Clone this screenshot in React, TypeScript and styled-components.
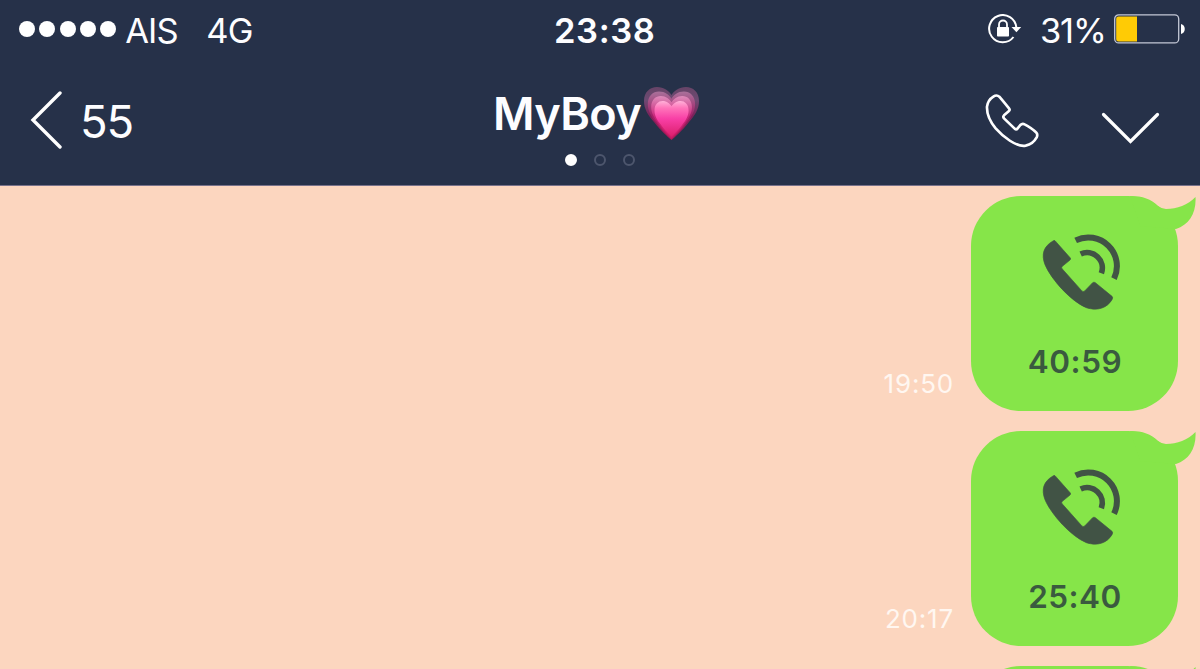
import React from "react";
import styled, { createGlobalStyle } from "styled-components";

const GlobalStyle = createGlobalStyle`
  * {
    box-sizing: border-box;
  }
  body {
    margin: 0;
    font-family: Inter, "Liberation Sans", sans-serif;
  }
`;

const Screen = styled.div`
  width: 1200px;
  height: 669px;
  overflow: hidden;
  display: flex;
  flex-direction: column;
  background: #fcd6bf;
`;

const Header = styled.header`
  flex: none;
  height: 186px;
  background: #263149;
  border-bottom: 1px solid #77718a;
  color: #fdfdff;
`;

const StatusBar = styled.div`
  display: grid;
  grid-template-columns: 554px 434px 1fr;
  height: 60px;
  align-items: center;
`;

const StatusGroup = styled.div<{ $left?: number }>`
  display: flex;
  align-items: center;
  height: 60px;
  padding-left: ${(p) => p.$left ?? 0}px;
`;

const Signal = styled.div`
  display: flex;
  gap: 4.3px;
  margin-right: 9px;
  margin-bottom: 2px;
`;

const SignalDot = styled.span`
  width: 16px;
  height: 16px;
  border-radius: 50%;
  background: #fff;
`;

const StatusText = styled.span<{ $width: number; $spacing?: number }>`
  width: ${(p) => p.$width}px;
  font-size: 34.5px;
  line-height: 60px;
  letter-spacing: ${(p) => p.$spacing ?? 0}px;
  padding-top: 1px;
  white-space: nowrap;
`;

const Clock = styled(StatusText)`
  font-weight: 600;
`;

const BatteryIcon = styled.svg`
  display: block;
  margin-bottom: 2px;
`;

const LockIcon = styled.svg`
  display: block;
  margin-right: 18px;
  margin-bottom: 3px;
`;

const NavBar = styled.div`
  display: grid;
  grid-template-columns: 493px 491px 1fr;
  height: 125px;
`;

const BackButton = styled.div`
  display: flex;
  align-items: center;
  height: 119px;
  padding-left: 30px;
`;

const BackCount = styled.span`
  margin-left: 17px;
  margin-top: 3px;
  font-size: 45.5px;
  letter-spacing: -1.2px;
`;

const TitleBlock = styled.div`
  display: flex;
  flex-direction: column;
`;

const Title = styled.div`
  display: flex;
  height: 90px;
  padding-top: 25px;
`;

const TitleText = styled.span`
  width: 150.5px;
  font-size: 45px;
  font-weight: 600;
  line-height: 58px;
  letter-spacing: -0.6px;
  white-space: nowrap;
`;

const HeartIcon = styled.svg`
  display: block;
  margin-top: 2px;
`;

const Pager = styled.div`
  display: flex;
  gap: 17px;
  padding-left: 72.4px;
  padding-top: 3.5px;
`;

const PageDot = styled.span<{ $active?: boolean }>`
  width: 12px;
  height: 12px;
  border-radius: 50%;
  border: 2px solid ${(p) => (p.$active ? "#fff" : "#4d566d")};
  background: ${(p) => (p.$active ? "#fff" : "transparent")};
`;

const Actions = styled.div`
  display: flex;
  padding-top: 32px;
`;

const ChevronDown = styled.svg`
  margin-left: 61px;
  margin-top: 17.5px;
`;

const Messages = styled.main`
  display: flex;
  flex-direction: column;
  gap: 20px;
  padding: 10px 22px 0 0;
`;

const MessageRow = styled.div`
  display: flex;
  flex: none;
  justify-content: flex-end;
  align-items: flex-end;
`;

const SentAt = styled.span`
  margin-right: 16.5px;
  margin-bottom: 11px;
  font-size: 26px;
  line-height: 32px;
  letter-spacing: 0.8px;
  color: #fff7f1;
`;

const Bubble = styled.div`
  position: relative;
  display: flex;
  flex-direction: column;
  align-items: center;
  width: 207.5px;
  height: 215px;
  padding: 38px 0 0 11.5px;
  border-radius: 50px;
  background: #86e549;
`;

const Tail = styled.svg`
  position: absolute;
  top: 0;
  right: -18px;
`;

const CallIcon = styled.svg`
  display: block;
  flex: none;
`;

const Duration = styled.span`
  margin-top: 31px;
  margin-right: 10px;
  font-size: 31.5px;
  font-weight: 600;
  line-height: 40px;
  letter-spacing: 0.5px;
  color: #3a5a3f;
`;

const calls = [
  { time: "19:50", duration: "40:59" },
  { time: "20:17", duration: "25:40" },
  { time: "", duration: "" },
];

const heartPath =
  "M27.5 53 C24 50 17 44 10 35 C4 28 0 22 0 14 C0 5 6 0 13 0 C20 0 25 4 27.5 8 C30 4 35 0 42 0 C49 0 55 5 55 14 C55 22 51 28 45 35 C38 44 31 50 27.5 53Z";

function Heart() {
  return (
    <HeartIcon width="56" height="54" viewBox="0 0 56 54">
      <defs>
        <linearGradient id="outer" x1="0" y1="0" x2="0" y2="1">
          <stop offset="0" stopColor="#674467" />
          <stop offset="0.25" stopColor="#6c4a72" />
          <stop offset="0.55" stopColor="#7c2059" />
          <stop offset="1" stopColor="#b01858" />
        </linearGradient>
        <linearGradient id="middle" x1="0" y1="0" x2="0" y2="1">
          <stop offset="0" stopColor="#a9719a" />
          <stop offset="0.5" stopColor="#a02068" />
          <stop offset="1" stopColor="#c41a62" />
        </linearGradient>
        <linearGradient id="third" x1="0" y1="0" x2="0" y2="1">
          <stop offset="0" stopColor="#dd8dbb" />
          <stop offset="0.5" stopColor="#c92479" />
          <stop offset="1" stopColor="#d01a68" />
        </linearGradient>
        <linearGradient id="inner" x1="0" y1="0" x2="0" y2="1">
          <stop offset="0" stopColor="#ffb0d8" />
          <stop offset="0.2" stopColor="#ff74ba" />
          <stop offset="0.5" stopColor="#f83fa6" />
          <stop offset="1" stopColor="#dc1f6c" />
        </linearGradient>
      </defs>
      <path d={heartPath} fill="url(#outer)" />
      <path
        d={heartPath}
        fill="url(#middle)"
        transform="translate(3.8 4.6) scale(0.86 0.89)"
      />
      <path
        d={heartPath}
        fill="url(#third)"
        transform="translate(7.2 9) scale(0.74 0.79)"
      />
      <path
        d={heartPath}
        fill="url(#inner)"
        transform="translate(10.5 14) scale(0.62 0.67)"
      />
    </HeartIcon>
  );
}

function App() {
  return (
    <>
      <GlobalStyle />
      <Screen>
        <Header>
          <StatusBar>
            <StatusGroup $left={19}>
              <Signal>
                {[0, 1, 2, 3, 4].map((v) => (
                  <SignalDot key={v} />
                ))}
              </Signal>
              <StatusText $width={81} $spacing={-0.9}>
                AIS
              </StatusText>
              <StatusText $width={50} $spacing={-0.8}>
                4G
              </StatusText>
            </StatusGroup>
            <StatusGroup>
              <Clock $width={100} $spacing={0.6}>
                23:38
              </Clock>
            </StatusGroup>
            <StatusGroup>
              <LockIcon width="34" height="30" viewBox="0 0 34 30" fill="none">
                <path
                  d="M28.3 13.5 A13.6 13.6 0 1 0 25.5 23"
                  stroke="#fff"
                  strokeWidth="2"
                />
                <path d="M23.5 13 H33.2 L28.4 18.2Z" fill="#fff" />
                <rect x="9" y="13" width="12" height="9.5" rx="0.8" fill="#fff" />
                <path
                  d="M11 13.5 V10.5 a4 4 0 0 1 8 0 V13.5"
                  stroke="#fff"
                  strokeWidth="1.8"
                />
              </LockIcon>
              <StatusText $width={74} $spacing={-1.2}>
                31%
              </StatusText>
              <BatteryIcon width="72" height="30" viewBox="0 0 72 30">
                <rect
                  x="0.7"
                  y="0.9"
                  width="64"
                  height="28"
                  rx="4"
                  fill="none"
                  stroke="#c4c8d6"
                  strokeWidth="1.3"
                />
                <path
                  d="M4.5 2.5 H23 V27.5 H4.5 a2.3 2.3 0 0 1 -2.3 -2.3 V4.8 a2.3 2.3 0 0 1 2.3 -2.3Z"
                  fill="#ffcb05"
                />
                <path d="M67 10 C72 11 72 19 67 20Z" fill="#fff" />
              </BatteryIcon>
            </StatusGroup>
          </StatusBar>
          <NavBar>
            <BackButton>
              <svg width="33" height="58" viewBox="0 0 33 58" fill="none">
                <path
                  d="M30 2 L3 29 L30 56"
                  stroke="#fff"
                  strokeWidth="3.4"
                  strokeLinecap="round"
                />
              </svg>
              <BackCount>55</BackCount>
            </BackButton>
            <TitleBlock>
              <Title>
                <TitleText>MyBoy</TitleText>
                <Heart />
              </Title>
              <Pager>
                <PageDot $active />
                <PageDot />
                <PageDot />
              </Pager>
            </TitleBlock>
            <Actions>
              <svg width="56" height="58" viewBox="0 0 168 174" fill="none">
                <path
                  d="M28 14 Q38 7 46 14 Q62 33 75 49 Q79 54 74 58 L60 70 Q56 74 60 79 L92 110 Q97 114 101 109 L109 99 Q115 93 122 97 Q145 109 157 122 Q162 128 158 136 Q147 156 125 161 C97 166 57 134 35 109 C17 87 8 68 9 44 Q12 24 28 14Z"
                  stroke="#fff"
                  strokeWidth="8"
                  strokeLinejoin="round"
                />
              </svg>
              <ChevronDown width="60" height="36" viewBox="0 0 60 36" fill="none">
                <path
                  d="M2.5 4.5 L29.5 31.5 L56.5 4.5"
                  stroke="#fff"
                  strokeWidth="3.2"
                  strokeLinecap="round"
                />
              </ChevronDown>
            </Actions>
          </NavBar>
        </Header>
        <Messages>
          {calls.map((v, idx) => (
            <MessageRow key={idx}>
              {v.time && <SentAt>{v.time}</SentAt>}
              <Bubble>
                <Tail width="66" height="36" viewBox="-16 0 66 36">
                  <path
                    d="M-16 0 C-3 0 5 3 12 10 Q16 13 20 13 C31 13 42 9 49.5 1 C50.5 17 43 29 30 33 L-6 30Z"
                    fill="#86e549"
                  />
                </Tail>
                <CallIcon width="80" height="77" viewBox="0 0 240 231" fill="none">
                  <path
                    d="M45 20 L91 72 Q93 75 90 78 L67 97 Q63 101 67 105 L125 170 Q129 175 134 171 L158 146 Q162 143 166 146 L216 187 Q220 191 216 197 C201 222 173 232 139 221 C93 202 34 137 15 92 C3 61 11 37 39 21 Q42 18 45 20Z"
                    fill="#415345"
                    stroke="#415345"
                    strokeWidth="2"
                  />
                  <path
                    d="M107 19 A86 86 0 0 1 222 134"
                    stroke="#415345"
                    strokeWidth="18"
                  />
                  <path
                    d="M122 60 A46 46 0 0 1 184 118"
                    stroke="#415345"
                    strokeWidth="17"
                  />
                </CallIcon>
                {v.duration && <Duration>{v.duration}</Duration>}
              </Bubble>
            </MessageRow>
          ))}
        </Messages>
      </Screen>
    </>
  );
}

export default App;
